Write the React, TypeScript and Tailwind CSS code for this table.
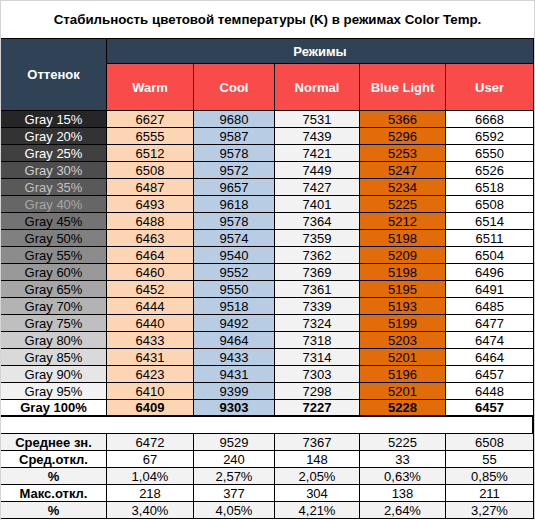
type Row = {
  label: string;
  shade: string;
  values: number[];
};

const rows: Row[] = [
  { label: "Gray 15%", shade: "bg-[#262626] text-white", values: [6627, 9680, 7531, 5366, 6668] },
  { label: "Gray 20%", shade: "bg-[#333333] text-white", values: [6555, 9587, 7439, 5296, 6592] },
  { label: "Gray 25%", shade: "bg-[#404040] text-white", values: [6512, 9578, 7421, 5253, 6550] },
  { label: "Gray 30%", shade: "bg-[#4d4d4d] text-[#d0d0d0]", values: [6508, 9572, 7449, 5247, 6526] },
  { label: "Gray 35%", shade: "bg-[#595959] text-[#c0c0c0]", values: [6487, 9657, 7427, 5234, 6518] },
  { label: "Gray 40%", shade: "bg-[#666666] text-[#a6a6a6]", values: [6493, 9618, 7401, 5225, 6508] },
  { label: "Gray 45%", shade: "bg-[#737373] text-black", values: [6488, 9578, 7364, 5212, 6514] },
  { label: "Gray 50%", shade: "bg-[#808080] text-black", values: [6463, 9574, 7359, 5198, 6511] },
  { label: "Gray 55%", shade: "bg-[#8c8c8c] text-black", values: [6464, 9540, 7362, 5209, 6504] },
  { label: "Gray 60%", shade: "bg-[#999999] text-black", values: [6460, 9552, 7369, 5198, 6496] },
  { label: "Gray 65%", shade: "bg-[#a6a6a6] text-black", values: [6452, 9550, 7361, 5195, 6491] },
  { label: "Gray 70%", shade: "bg-[#b3b3b3] text-black", values: [6444, 9518, 7339, 5193, 6485] },
  { label: "Gray 75%", shade: "bg-[#bfbfbf] text-black", values: [6440, 9492, 7324, 5199, 6477] },
  { label: "Gray 80%", shade: "bg-[#cccccc] text-black", values: [6433, 9464, 7318, 5203, 6474] },
  { label: "Gray 85%", shade: "bg-[#d9d9d9] text-black", values: [6431, 9433, 7314, 5201, 6464] },
  { label: "Gray 90%", shade: "bg-[#e6e6e6] text-black", values: [6423, 9431, 7303, 5196, 6457] },
  { label: "Gray 95%", shade: "bg-[#f2f2f2] text-black", values: [6410, 9399, 7298, 5201, 6448] },
];

const lastRow: Row = {
  label: "Gray 100%",
  shade: "bg-white text-black",
  values: [6409, 9303, 7227, 5228, 6457],
};

const modes = ["Warm", "Cool", "Normal", "Blue Light", "User"];
const modeBg = ["bg-[#fcd5b4]", "bg-[#b8cce4]", "bg-[#f2f2f2]", "bg-[#e26b0a]", "bg-white"];

const stats = [
  { label: "Среднее зн.", values: ["6472", "9529", "7367", "5225", "6508"], bg: "bg-[#f2f2f2]" },
  { label: "Сред.откл.", values: ["67", "240", "148", "33", "55"], bg: "bg-white" },
  { label: "%", values: ["1,04%", "2,57%", "2,05%", "0,63%", "0,85%"], bg: "bg-[#f2f2f2]" },
  { label: "Макс.откл.", values: ["218", "377", "304", "138", "211"], bg: "bg-white" },
  { label: "%", values: ["3,40%", "4,05%", "4,21%", "2,64%", "3,27%"], bg: "bg-[#f2f2f2]" },
];

const cols = "grid grid-cols-[106px_87px_81px_85px_86px_88px]";
const cell = "flex items-center justify-center border-r border-black";

function DataRow({ row, last }: { row: Row; last?: boolean }) {
  return (
    <div className={`${cols} h-[17px] border-black ${last ? "border-b-2 font-bold" : "border-b"}`}>
      <div className={`${cell} ${row.shade}`}>{row.label}</div>
      {row.values.map((v, i) => (
        <div key={i} className={`${cell} ${modeBg[i]} text-black`}>
          {v}
        </div>
      ))}
    </div>
  );
}

export default function App() {
  return (
    <div
      className="w-[535px] h-[520px] bg-white border-l border-t border-r border-[#d4d4d4] text-[13px] leading-none overflow-hidden"
      style={{ fontFamily: '"Liberation Sans", Arial, sans-serif' }}
    >
      {/* TITLE */}
      <div className="h-[38px] w-[533px] flex items-center justify-center border-b border-black font-bold text-[13.3px] text-black">
        Стабильность цветовой температуры (K) в режимах Color Temp.
      </div>

      {/* HEADER */}
      <div className="flex h-[72px] w-[533px] border-b border-black bg-[#304256] text-white font-bold">
        <div className="w-[106px] flex items-center justify-center border-r border-black">Оттенок</div>
        <div className="flex-1 flex flex-col">
          <div className="h-[25px] flex items-center justify-center border-b border-r border-black">Режимы</div>
          <div className="flex-1 grid grid-cols-[87px_81px_85px_86px_88px] bg-[#fa4b4b]">
            {modes.map((m) => (
              <div key={m} className={cell}>
                {m}
              </div>
            ))}
          </div>
        </div>
      </div>

      {/* DATA */}
      {rows.map((r) => (
        <DataRow key={r.label} row={r} />
      ))}
      <DataRow row={lastRow} last />

      {/* SPACER */}
      <div className="h-[17px] w-[533px] border-b border-r-2 border-black bg-white" />

      {/* STATS */}
      {stats.map((s, i) => (
        <div key={i} className={`${cols} h-[17px] border-b border-black ${s.bg} text-black`}>
          <div className={`${cell} font-bold`}>{s.label}</div>
          {s.values.map((v, j) => (
            <div key={j} className={cell}>
              {v}
            </div>
          ))}
        </div>
      ))}
    </div>
  );
}
